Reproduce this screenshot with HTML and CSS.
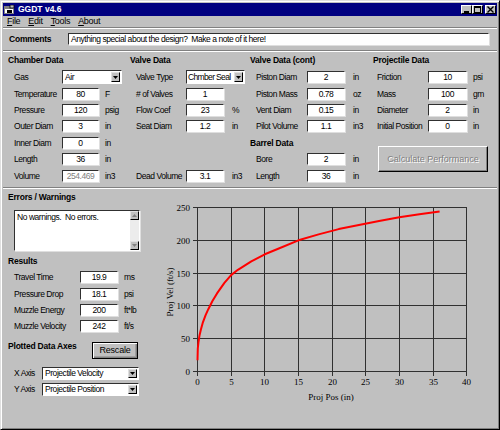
FILE: index.html
```html
<!DOCTYPE html>
<html lang="en">
<head>
<meta charset="utf-8">
<title>GGDT v4.6</title>
<link rel="stylesheet" href="styles.css">
</head>
<body>
<div class="window">
  <div class="titlebar">
    <svg class="app-icon" width="11" height="10" viewBox="0 0 11 10">
      <rect x="0.5" y="1.5" width="9" height="7" fill="#fff" stroke="#808080"/>
      <rect x="1" y="2" width="8" height="2" fill="#808080"/>
      <path d="M3 5h5v3H3z" fill="#000"/>
      <rect x="6" y="0" width="4" height="3" fill="#c0c0c0" stroke="#000" stroke-width="0.8"/>
    </svg>
    <span class="title">GGDT v4.6</span>
    <div class="caption-btns">
      <span class="cbtn"><svg width="9" height="7" viewBox="0 0 9 7"><rect x="2" y="5" width="5" height="2" fill="#000"/></svg></span>
      <span class="cbtn"><svg width="9" height="7" viewBox="0 0 9 7"><rect x="1.5" y="0.5" width="6" height="6" fill="none" stroke="#000"/><rect x="1" y="0" width="7" height="2" fill="#000"/></svg></span>
      <span class="cbtn close"><svg width="9" height="7" viewBox="0 0 9 7"><path d="M1.5 0.5l6 6M7.5 0.5l-6 6" stroke="#000" stroke-width="1.4"/></svg></span>
    </div>
  </div>

  <div class="menubar">
    <span class="menu-item"><u>F</u>ile</span>
    <span class="menu-item"><u>E</u>dit</span>
    <span class="menu-item"><u>T</u>ools</span>
    <span class="menu-item"><u>A</u>bout</span>
  </div>
  <div class="etch"></div>

  <div class="comments">
    <span class="comments-label">Comments</span>
    <div class="box comments-box">Anything special about the design?&nbsp; Make a note of it here!</div>
  </div>
  <div class="etch"></div>

  <div class="top-panel">
    <section class="group chamber">
      <div class="group-title">Chamber Data</div>
      <div class="field"><span class="lbl">Gas</span><div class="combo combo-wide"><span class="combo-text">Air</span><span class="combo-btn"><svg width="5" height="3" viewBox="0 0 5 3"><path d="M0 0h5L2.5 3z" fill="#000"/></svg></span></div></div>
      <div class="field"><span class="lbl">Temperature</span><span class="box num">80</span><span class="unit">F</span></div>
      <div class="field"><span class="lbl">Pressure</span><span class="box num">120</span><span class="unit">psig</span></div>
      <div class="field"><span class="lbl">Outer Diam</span><span class="box num">3</span><span class="unit">in</span></div>
      <div class="field"><span class="lbl">Inner Diam</span><span class="box num">0</span><span class="unit">in</span></div>
      <div class="field"><span class="lbl">Length</span><span class="box num">36</span><span class="unit">in</span></div>
      <div class="field"><span class="lbl">Volume</span><span class="box num disabled">254.469</span><span class="unit">in3</span></div>
    </section>

    <section class="group valve">
      <div class="group-title">Valve Data</div>
      <div class="field"><span class="lbl">Valve Type</span><div class="combo combo-wide"><span class="combo-text">Chmber Seal</span><span class="combo-btn"><svg width="5" height="3" viewBox="0 0 5 3"><path d="M0 0h5L2.5 3z" fill="#000"/></svg></span></div></div>
      <div class="field"><span class="lbl"># of Valves</span><span class="box num">1</span></div>
      <div class="field"><span class="lbl">Flow Coef</span><span class="box num">23</span><span class="unit">%</span></div>
      <div class="field"><span class="lbl">Seat Diam</span><span class="box num">1.2</span><span class="unit">in</span></div>
      <div class="field-spacer"></div>
      <div class="field"><span class="lbl">Dead Volume</span><span class="box num">3.1</span><span class="unit">in3</span></div>
    </section>

    <section class="group valve-cont">
      <div class="group-title">Valve Data (cont)</div>
      <div class="field"><span class="lbl">Piston Diam</span><span class="box num">2</span><span class="unit">in</span></div>
      <div class="field"><span class="lbl">Piston Mass</span><span class="box num">0.78</span><span class="unit">oz</span></div>
      <div class="field"><span class="lbl">Vent Diam</span><span class="box num">0.15</span><span class="unit">in</span></div>
      <div class="field"><span class="lbl">Pilot Volume</span><span class="box num">1.1</span><span class="unit">in3</span></div>
      <div class="sub-title">Barrel Data</div>
      <div class="field"><span class="lbl">Bore</span><span class="box num">2</span><span class="unit">in</span></div>
      <div class="field"><span class="lbl">Length</span><span class="box num">36</span><span class="unit">in</span></div>
    </section>

    <section class="group projectile">
      <div class="group-title">Projectile Data</div>
      <div class="field"><span class="lbl">Friction</span><span class="box num">10</span><span class="unit">psi</span></div>
      <div class="field"><span class="lbl">Mass</span><span class="box num">100</span><span class="unit">gm</span></div>
      <div class="field"><span class="lbl">Diameter</span><span class="box num">2</span><span class="unit">in</span></div>
      <div class="field"><span class="lbl">Initial Position</span><span class="box num">0</span><span class="unit">in</span></div>
      <div class="btn calc-btn">Calculate Performance</div>
    </section>
  </div>
  <div class="etch"></div>

  <div class="bottom-panel">
    <div class="left-col">
      <div class="group-title">Errors / Warnings</div>
      <div class="box errbox">
        <span class="err-text">No warnings.  No errors.</span>
        <span class="scrollbar">
          <span class="sb-btn"><svg width="5" height="3" viewBox="0 0 5 3"><path d="M0 3h5L2.5 0z" fill="#808080"/></svg></span>
          <span class="sb-track"></span>
          <span class="sb-btn"><svg width="5" height="3" viewBox="0 0 5 3"><path d="M0 0h5L2.5 3z" fill="#808080"/></svg></span>
        </span>
      </div>

      <div class="group-title results-title">Results</div>
      <div class="rfield"><span class="lbl">Travel Time</span><span class="box num">19.9</span><span class="unit">ms</span></div>
      <div class="rfield"><span class="lbl">Pressure Drop</span><span class="box num">18.1</span><span class="unit">psi</span></div>
      <div class="rfield"><span class="lbl">Muzzle Energy</span><span class="box num">200</span><span class="unit">ft*lb</span></div>
      <div class="rfield"><span class="lbl">Muzzle Velocity</span><span class="box num">242</span><span class="unit">ft/s</span></div>

      <div class="plot-row">
        <div class="group-title plot-title">Plotted Data Axes</div>
        <div class="btn rescale-btn">Rescale</div>
      </div>
      <div class="axis-row"><span class="lbl">X Axis</span><div class="combo combo-axis"><span class="combo-text">Projectile Velocity</span><span class="combo-btn"><svg width="5" height="3" viewBox="0 0 5 3"><path d="M0 0h5L2.5 3z" fill="#000"/></svg></span></div></div>
      <div class="axis-row"><span class="lbl">Y Axis</span><div class="combo combo-axis"><span class="combo-text">Projectile Position</span><span class="combo-btn"><svg width="5" height="3" viewBox="0 0 5 3"><path d="M0 0h5L2.5 3z" fill="#000"/></svg></span></div></div>
    </div>

    <svg class="chart" width="340" height="220" viewBox="155 192 340 220">
      <g stroke="#303030" stroke-width="1" fill="none" shape-rendering="crispEdges">
        <path d="M197.5 207.5V375.5M231.5 207.5V375.5M264.5 207.5V375.5M298.5 207.5V375.5M332.5 207.5V375.5M365.5 207.5V375.5M399.5 207.5V375.5M433.5 207.5V375.5M466.5 207.5V375.5"/>
        <path d="M193 207.5H466.5M193 240.5H466.5M193 273.5H466.5M193 305.5H466.5M193 338.5H466.5M193 371.5H466.5"/>
      </g>
      <g class="tick-y" text-anchor="end">
        <text x="190" y="210.5">250</text>
        <text x="190" y="243.5">200</text>
        <text x="190" y="276.5">150</text>
        <text x="190" y="308.5">100</text>
        <text x="190" y="341.5">50</text>
        <text x="190" y="374.5">0</text>
      </g>
      <g class="tick-x" text-anchor="middle">
        <text x="197.5" y="385">0</text>
        <text x="231.5" y="385">5</text>
        <text x="264.5" y="385">10</text>
        <text x="298.5" y="385">15</text>
        <text x="332.5" y="385">20</text>
        <text x="365.5" y="385">25</text>
        <text x="399.5" y="385">30</text>
        <text x="433.5" y="385">35</text>
        <text x="466.5" y="385">40</text>
      </g>
      <text class="axis-title" x="331" y="400" text-anchor="middle">Proj Pos (in)</text>
      <text class="axis-title" transform="translate(173 292) rotate(-90)" text-anchor="middle">Proj Vel (ft/s)</text>
      <polyline fill="none" stroke="#ff0000" stroke-width="2" stroke-linejoin="round" points="197.5,360.3 197.8,348.5 198.5,342.0 199.5,335.4 200.9,329.5 202.9,322.3 205.6,315.1 208.3,309.2 212.3,301.3 217.0,293.4 224.4,282.9 231.1,275.1 237.9,269.8 251.3,261.3 264.8,254.3 278.2,248.8 298.4,240.3 318.6,234.4 338.7,229.1 358.9,224.9 379.1,220.9 399.3,217.3 419.4,214.2 439.6,211.4"/>
    </svg>
  </div>
</div>
</body>
</html>
```

FILE: styles.css
```css
* {
  box-sizing: border-box;
}

body {
  margin: 0;
  background: #c0c0c0;
  color: #000;
  font-family: "Liberation Sans", Arial, sans-serif;
  font-size: 8.5px;
  letter-spacing: -0.45px;
}

.window {
  width: 500px;
  height: 430px;
  padding: 2px;
  border: 1px solid;
  border-color: #dfdfdf #000 #000 #dfdfdf;
  box-shadow: inset 1px 1px #fff, inset -1px -1px #808080;
  background: #c0c0c0;
  display: flex;
  flex-direction: column;
}

/* ---------- title bar ---------- */
.titlebar {
  height: 13px;
  flex: none;
  display: flex;
  align-items: center;
  padding: 0 1px 0 1px;
  background: #000080;
  color: #fff;
}

.app-icon {
  flex: none;
  margin-right: 3px;
}

.title {
  font-weight: bold;
  font-size: 8.5px;
  letter-spacing: 0;
  line-height: 13px;
}

.caption-btns {
  margin-left: auto;
  display: flex;
}

.cbtn {
  width: 11px;
  height: 9px;
  display: flex;
  align-items: center;
  justify-content: center;
  background: #c0c0c0;
  border: 1px solid;
  border-color: #fff #000 #000 #fff;
}

.cbtn.close {
  margin-left: 2px;
}

/* ---------- menu ---------- */
.menubar {
  height: 11px;
  flex: none;
  display: flex;
  gap: 8px;
  padding-left: 4px;
  line-height: 11px;
  font-size: 9px;
  letter-spacing: -0.3px;
}

.etch {
  height: 2px;
  flex: none;
  border-top: 1px solid #808080;
  border-bottom: 1px solid #fff;
}

/* ---------- comments ---------- */
.comments {
  height: 21px;
  flex: none;
  display: flex;
  align-items: center;
  padding: 0 0 2px 6px;
}

.comments-label {
  width: 59px;
  font-weight: bold;
  letter-spacing: -0.2px;
}

.comments-box {
  width: 421px;
  height: 13px;
  line-height: 11px;
  padding-left: 2px;
}

/* ---------- shared controls ---------- */
.box {
  display: block;
  flex: none;
  height: 12px;
  background: #fff;
  border: 1px solid;
  border-color: #303030 #fff #fff #303030;
  box-shadow: 1px 1px 0 #dfdfdf;
  line-height: 10px;
  white-space: nowrap;
  overflow: hidden;
}

.box.num {
  text-align: center;
}

.box.disabled {
  color: #808080;
}

.combo {
  flex: none;
  height: 14px;
  display: flex;
  align-items: stretch;
  background: #fff;
  border: 1px solid;
  border-color: #303030 #fff #fff #303030;
}

.combo-text {
  flex: 1;
  min-width: 0;
  padding-left: 2px;
  line-height: 12px;
  white-space: nowrap;
  overflow: hidden;
}

.combo-btn {
  width: 9px;
  flex: none;
  margin: 1px;
  display: flex;
  align-items: center;
  justify-content: center;
  background: #c0c0c0;
  border: 1px solid;
  border-color: #dfdfdf #000 #000 #dfdfdf;
}

.btn {
  display: flex;
  align-items: center;
  justify-content: center;
  background: #c0c0c0;
  border: 1px solid;
  border-color: #fff #000 #000 #fff;
  box-shadow: inset -1px -1px #808080;
}

/* ---------- top panel ---------- */
.top-panel {
  height: 135px;
  flex: none;
  display: grid;
  grid-template-columns: 122px 120px 123px 129px;
}

.group {
  padding-top: 1px;
}

.group-title {
  font-weight: bold;
  letter-spacing: -0.2px;
  line-height: 14px;
  padding-left: 5px;
  margin-bottom: 2px;
  white-space: nowrap;
}

.sub-title {
  font-weight: bold;
  letter-spacing: -0.2px;
  height: 16.4px;
  line-height: 16.4px;
  padding-left: 5px;
}

.field {
  height: 16.4px;
  display: flex;
  align-items: center;
  padding-left: var(--pad);
}

.field-spacer {
  height: 32.8px;
}

.field .lbl {
  width: var(--lab);
  flex: none;
  white-space: nowrap;
}

.field .box {
  width: var(--inp);
}

.field .unit {
  margin-left: var(--gap);
}

.chamber {
  --pad: 11px;
  --lab: 48px;
  --inp: 37px;
  --gap: 6px;
}

.chamber .combo-wide {
  width: 60px;
}

.valve {
  --pad: 11px;
  --lab: 50px;
  --inp: 38px;
  --gap: 8px;
}

.valve .combo-wide {
  width: 59px;
}

.valve .combo-text {
  padding-left: 1px;
  letter-spacing: -0.65px;
}

.valve-cont {
  --pad: 11px;
  --lab: 51px;
  --inp: 38px;
  --gap: 8px;
}

.projectile {
  --pad: 9px;
  --lab: 51px;
  --inp: 39px;
  --gap: 6px;
}

.calc-btn {
  width: 110px;
  height: 26px;
  margin: 11px 0 0 10px;
  color: #808080;
  text-shadow: 1px 1px 0 #fff;
  font-size: 9px;
  letter-spacing: 0;
}

/* ---------- bottom panel ---------- */
.bottom-panel {
  flex: 1;
  display: flex;
}

.left-col {
  width: 152px;
  flex: none;
  padding: 1px 0 0 5px;
}

.left-col .group-title {
  padding-left: 0;
  margin-bottom: 0;
}

.errbox {
  width: 126px;
  height: 41px;
  margin: 6px 0 0 6px;
  display: flex;
  line-height: 11px;
  white-space: pre;
}

.err-text {
  flex: 1;
  padding: 1px 0 0 2px;
}

.scrollbar {
  width: 9px;
  display: flex;
  flex-direction: column;
}

.sb-btn {
  height: 9px;
  display: flex;
  align-items: center;
  justify-content: center;
  background: #c0c0c0;
  border: 1px solid;
  border-color: #dfdfdf #000 #000 #dfdfdf;
}

.sb-track {
  flex: 1;
  background: #ececec;
}

.results-title {
  margin-top: 3px;
}

.left-col .results-title {
  margin-bottom: 1px;
}

.rfield {
  height: 16.4px;
  display: flex;
  align-items: center;
  padding-left: 6px;
}

.rfield .lbl {
  width: 66px;
  flex: none;
}

.rfield .box {
  width: 38px;
}

.rfield .unit {
  margin-left: 6px;
}

.plot-row {
  display: flex;
  align-items: flex-start;
  margin-top: 4px;
}

.left-col .plot-title {
  width: 84px;
}

.rescale-btn {
  width: 46px;
  height: 17px;
  margin-top: 3px;
  border: 1px solid #000;
  box-shadow: inset 1px 1px #fff, inset -1px -1px #808080, inset -2px -2px #a0a0a0;
  font-size: 9px;
  letter-spacing: -0.2px;
}

.axis-row {
  height: 13px;
  margin-top: 3px;
  display: flex;
  align-items: center;
  padding-left: 6px;
}

.plot-row + .axis-row {
  margin-top: 8px;
}

.axis-row .lbl {
  width: 28px;
  flex: none;
}

.combo-axis {
  width: 97px;
  height: 13px;
}

.combo-axis .combo-text {
  line-height: 11px;
}

/* ---------- chart ---------- */
.chart {
  flex: none;
  margin-top: 3px;
  margin-left: 0;
  font-family: "Liberation Serif", "Times New Roman", serif;
  letter-spacing: 0;
}

.tick-y,
.tick-x,
.axis-title {
  font-size: 9px;
  fill: #000;
}
```
